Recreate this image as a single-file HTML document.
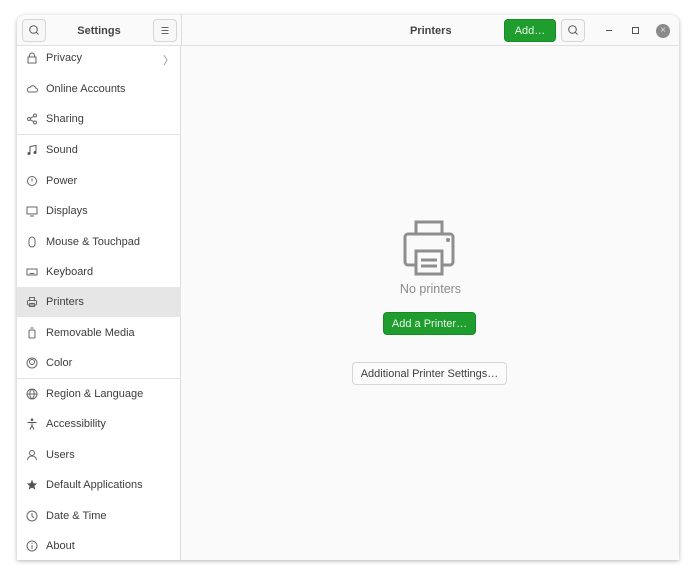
<!DOCTYPE html>
<html><head><style>
*{margin:0;padding:0;box-sizing:border-box}
body{width:696px;height:580px;background:#fff;font-family:"Liberation Sans",sans-serif;font-size:11px;color:#3d3d3d;position:relative;overflow:hidden}
.win{position:absolute;left:17px;top:15px;width:662px;height:545px;background:#fafafa;border-radius:8px 8px 0 0;box-shadow:0 1px 4px rgba(0,0,0,.3);overflow:hidden}
.hdr{position:absolute;left:0;top:0;width:662px;height:31px;background:#fafafa;border-bottom:1px solid #e0e0e0}
.side{position:absolute;left:0;top:31px;width:164px;height:514px;background:#fff;border-right:1px solid #dcdcdc}
.hsep{position:absolute;left:164px;top:0;width:1px;height:31px;background:#dcdcdc}
.btn{position:absolute;border:1px solid #d6d6d6;border-radius:4px;background:#f7f7f7;display:flex;align-items:center;justify-content:center}
.row{position:absolute;left:0;width:164px;height:30px}
.row span{position:absolute;left:29px;top:9px}
.row svg{position:absolute;left:9px;top:9px}
.sel{background:#e6e6e6}
.sep{position:absolute;left:0;width:164px;height:1px;background:#e2e2e2}
.green{background:#1f9d2e;color:#e8f5e8;border:1px solid #178a25;border-radius:4px;position:absolute;display:flex;align-items:center;justify-content:center}
</style></head><body>
<div class="win">
<div class="hdr">
 <div class="btn" style="left:5px;top:4px;width:24px;height:23px"><svg width="22" height="21" viewBox="0 0 22 21"><circle cx="10.5" cy="9.5" r="3.8" fill="none" stroke="#555" stroke-width="1"/><line x1="13.3" y1="12.3" x2="15.5" y2="14.5" stroke="#555"/></svg></div>
 <div style="position:absolute;left:0;width:164px;top:10px;text-align:center;font-weight:bold;color:#444">Settings</div>
 <div class="btn" style="left:136px;top:4px;width:24px;height:23px"><svg width="22" height="21" viewBox="0 0 22 21"><path d="M7.5 7.5h7M7.5 10.5h7M7.5 13.5h7" stroke="#666" stroke-width="1"/></svg></div>
 <div class="hsep"></div>
 <div style="position:absolute;left:393px;top:10px;font-weight:bold;color:#444">Printers</div>
 <div class="green" style="left:487px;top:4px;width:52px;height:23px">Add…</div>
 <div class="btn" style="left:544px;top:4px;width:24px;height:23px"><svg width="22" height="21" viewBox="0 0 22 21"><circle cx="10.5" cy="9.5" r="3.8" fill="none" stroke="#555"/><line x1="13.3" y1="12.3" x2="15.5" y2="14.5" stroke="#555"/></svg></div>
 <div style="position:absolute;left:589px;top:15px;width:6px;height:1px;background:#555"></div>
 <div style="position:absolute;left:615px;top:12px;width:7px;height:7px;border:1px solid #555"></div>
 <div style="position:absolute;left:639px;top:9px;width:14px;height:14px;border-radius:50%;background:#8a8a8a;color:#ddd;font-size:10px;line-height:14px;text-align:center">×</div>
</div>
<div class="side">
 <div class="row" style="top:-3px"><svg width="12" height="12"><rect x="2" y="5" width="8" height="6" fill="none" stroke="#666"/><path d="M3.5 5V3.5a2.5 2.5 0 0 1 5 0V5" fill="none" stroke="#666"/></svg><span>Privacy</span><span style="left:146px;color:#888">〉</span></div>
 <div class="row" style="top:28px"><svg width="12" height="12"><path d="M3 9h6.5a2 2 0 0 0 0-4 3 3 0 0 0-5.6-.5A2.3 2.3 0 0 0 3 9z" fill="none" stroke="#666"/></svg><span>Online Accounts</span></div>
 <div class="row" style="top:58px"><svg width="12" height="12"><circle cx="3" cy="6" r="1.5" fill="none" stroke="#666"/><circle cx="9" cy="2.5" r="1.5" fill="none" stroke="#666"/><circle cx="9" cy="9.5" r="1.5" fill="none" stroke="#666"/><path d="M4.3 5.3l3.4-2M4.3 6.7l3.4 2" stroke="#666"/></svg><span>Sharing</span></div>
 <div class="sep" style="top:88px"></div>
 <div class="row" style="top:89px"><svg width="12" height="12"><path d="M4 9V2.5l6-1V8" fill="none" stroke="#555"/><circle cx="3" cy="9.5" r="1.5" fill="#555"/><circle cx="9" cy="8.5" r="1.5" fill="#555"/></svg><span>Sound</span></div>
 <div class="row" style="top:120px"><svg width="12" height="12"><circle cx="6" cy="6" r="4.5" fill="none" stroke="#666"/><path d="M6 3.5v3" stroke="#666"/></svg><span>Power</span></div>
 <div class="row" style="top:150px"><svg width="12" height="12"><rect x="1" y="2" width="10" height="7" fill="none" stroke="#666"/><path d="M4 11h4" stroke="#666"/></svg><span>Displays</span></div>
 <div class="row" style="top:181px"><svg width="12" height="12"><rect x="3" y="1" width="6" height="10" rx="3" fill="none" stroke="#666"/></svg><span>Mouse &amp; Touchpad</span></div>
 <div class="row" style="top:211px"><svg width="12" height="12"><rect x="1" y="3" width="10" height="6" fill="none" stroke="#666"/><path d="M3.5 7.5h5" stroke="#666"/></svg><span>Keyboard</span></div>
 <div class="row sel" style="top:241px"><svg width="12" height="12"><rect x="3.5" y="1.5" width="5" height="3" fill="none" stroke="#666"/><rect x="1.5" y="4.5" width="9" height="4.5" rx="1" fill="none" stroke="#666"/><rect x="3.5" y="7.5" width="5" height="3" fill="none" stroke="#666"/></svg><span>Printers</span></div>
 <div class="row" style="top:272px"><svg width="12" height="12"><rect x="3" y="3" width="6" height="8" rx="1" fill="none" stroke="#666"/><path d="M4.5 1h3" stroke="#666"/></svg><span>Removable Media</span></div>
 <div class="row" style="top:302px"><svg width="12" height="12"><circle cx="6" cy="6" r="5" fill="none" stroke="#666"/><circle cx="6" cy="5" r="2.5" fill="none" stroke="#666"/></svg><span>Color</span></div>
 <div class="sep" style="top:332px"></div>
 <div class="row" style="top:333px"><svg width="12" height="12"><circle cx="6" cy="6" r="5" fill="none" stroke="#666"/><path d="M1 6h10M6 1c-3 3-3 7 0 10M6 1c3 3 3 7 0 10" fill="none" stroke="#666"/></svg><span>Region &amp; Language</span></div>
 <div class="row" style="top:363px"><svg width="12" height="12"><circle cx="6" cy="1.8" r="1.3" fill="#555"/><path d="M1.5 4.5h9M6 4.5v3l-2 4M6 7.5l2 4" fill="none" stroke="#555"/></svg><span>Accessibility</span></div>
 <div class="row" style="top:394px"><svg width="12" height="12"><circle cx="6" cy="4" r="2.5" fill="none" stroke="#666"/><path d="M1.5 11a4.5 4 0 0 1 9 0" fill="none" stroke="#666"/></svg><span>Users</span></div>
 <div class="row" style="top:424px"><svg width="12" height="12"><path d="M6 .8l1.5 3.4 3.7.3-2.8 2.4.9 3.6L6 8.6 2.7 10.5l.9-3.6L.8 4.5l3.7-.3z" fill="#555"/></svg><span>Default Applications</span></div>
 <div class="row" style="top:455px"><svg width="12" height="12"><circle cx="6" cy="6" r="5" fill="none" stroke="#666"/><path d="M6 3v3l2 2" fill="none" stroke="#666"/></svg><span>Date &amp; Time</span></div>
 <div class="row" style="top:485px"><svg width="12" height="12"><circle cx="6" cy="6" r="5" fill="none" stroke="#666"/><path d="M6 5v4M6 3v1" stroke="#666"/></svg><span>About</span></div>
</div>
<svg style="position:absolute;left:385px;top:205px" width="58" height="56" viewBox="0 0 58 56"><g fill="none" stroke="#8e8e8e" stroke-width="3"><path d="M14 14V2h26v12"/><path d="M13 45H6a3 3 0 0 1-3-3V17a3 3 0 0 1 3-3h42a3 3 0 0 1 3 3v25a3 3 0 0 1-3 3h-7"/><rect x="14" y="31" width="26" height="23"/><path d="M19 40h16M19 46h16"/></g><circle cx="46" cy="20" r="2" fill="#8e8e8e"/></svg>
<div style="position:absolute;left:165px;width:497px;top:267px;text-align:center;font-size:12.5px;color:#8a8a8a">No printers</div>
<div class="green" style="left:366px;top:297px;width:93px;height:23px">Add a Printer…</div>
<div class="btn" style="left:335px;top:347px;width:155px;height:23px;background:#fbfbfb;color:#3d3d3d">Additional Printer Settings…</div>
</div>
</body></html>
